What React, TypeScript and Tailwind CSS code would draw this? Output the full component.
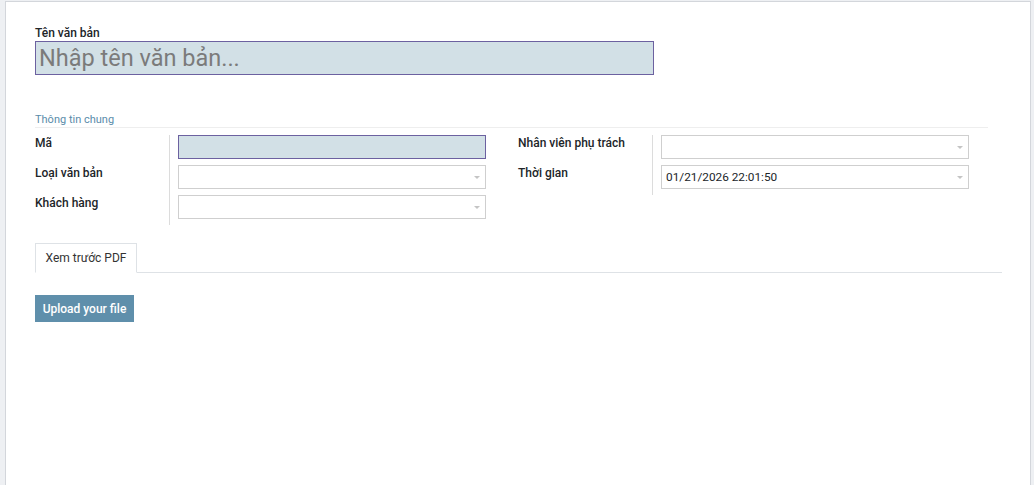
import type { ReactNode } from 'react';

const caret = (
  <span className="absolute right-[5px] top-[10px] h-0 w-0 border-x-[3px] border-t-[3px] border-x-transparent border-t-[#c4c4c4]" />
);

function Field({ label, children, rule }: { label: string; children: ReactNode; rule?: boolean }) {
  return (
    <div className="flex h-[30px]">
      <div className={`w-[135px] shrink-0 text-[12px] font-medium leading-[16px] text-[#212529] ${rule ? 'border-r border-[#dcdcdc]' : ''}`}>
        {label}
      </div>
      <div className="ml-[8px] w-[308px]">{children}</div>
    </div>
  );
}

function Select({ value }: { value?: string }) {
  return (
    <div className="relative h-[24px] border border-[#cfcfcf] bg-white px-[4px] text-[11.8px] leading-[22px] text-[#212529]">
      {value}
      {caret}
    </div>
  );
}

export default function App() {
  return (
    <div className="h-[485px] overflow-hidden bg-[#eef0f3] pl-[5px] pr-[3px] pt-[1px] font-['Roboto',sans-serif]">
      <div className="h-[500px] border border-[#d3d6db] bg-white pl-[29px] pr-[28px] pt-[24px]">
        <div className="text-[12px] font-medium leading-[14px] text-[#212529]">Tên văn bản</div>
        <div className="mt-[1px] h-[34px] w-[619px] border border-[#6c61a0] bg-[#d2e0e6] pl-[3px] text-[23.5px] leading-[32px] text-[#7b7b7b]">
          Nhập tên văn bản...
        </div>

        <div className="mr-[14px] mt-[38px] border-b border-[#eeeeee] pb-[1px] text-[11px] leading-[13px] text-[#5a8caa]">
          Thông tin chung
        </div>

        <div className="mt-[7px] flex gap-[32px]">
          <div>
            <Field label="Mã" rule>
              <div className="h-[24px] border border-[#6c61a0] bg-[#d2e0e6]" />
            </Field>
            <Field label="Loại văn bản" rule>
              <Select />
            </Field>
            <Field label="Khách hàng" rule>
              <Select />
            </Field>
          </div>
          <div>
            <Field label="Nhân viên phụ trách" rule>
              <Select />
            </Field>
            <Field label="Thời gian" rule>
              <Select value="01/21/2026 22:01:50" />
            </Field>
          </div>
        </div>

        <div className="mt-[18px] flex border-b border-[#dee2e6]">
          <div className="-mb-px h-[30px] w-[102px] border border-b-white border-[#dee2e6] bg-white text-center text-[12px] leading-[28px] text-[#333]">
            Xem trước PDF
          </div>
        </div>

        <button className="mt-[22px] h-[27px] w-[99px] bg-[#5f8fab] text-[12px] font-medium text-white">
          Upload your file
        </button>
      </div>
    </div>
  );
}
